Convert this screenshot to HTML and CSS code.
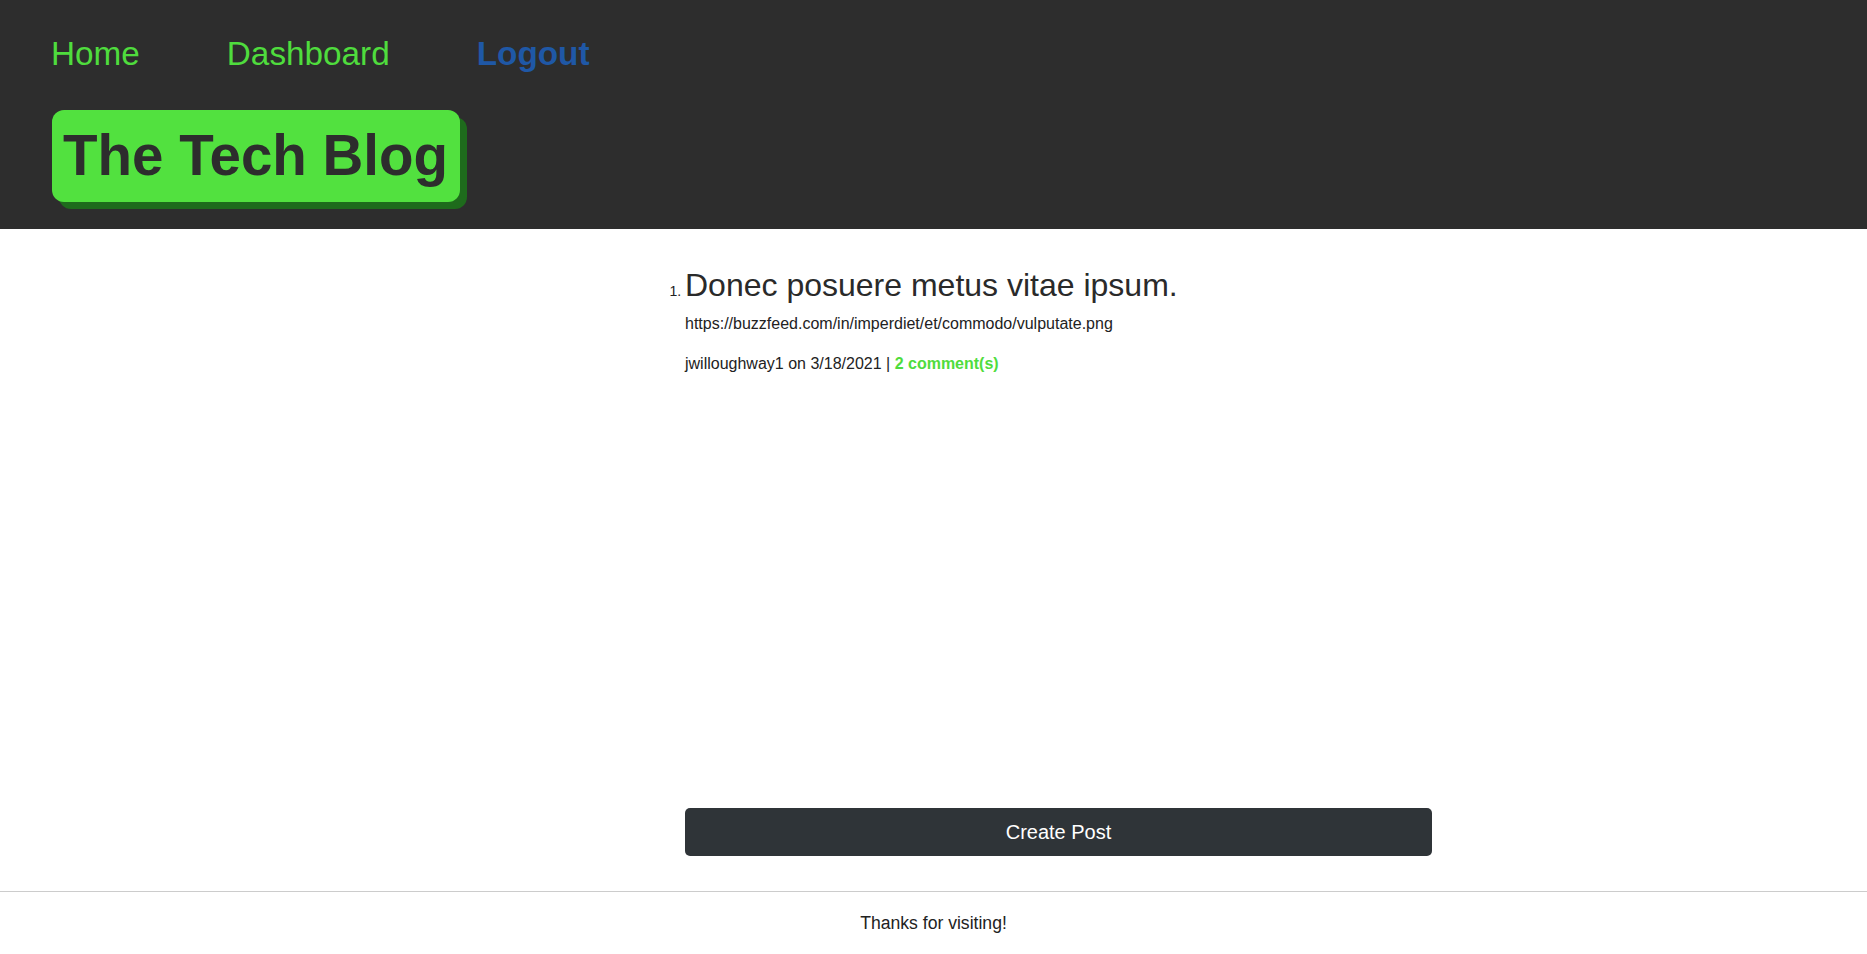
FILE: index.html
```html
<!DOCTYPE html>
<html lang="en">
<head>
<meta charset="utf-8">
<title>The Tech Blog</title>
<link rel="stylesheet" href="styles.css">
</head>
<body>
<header class="site-header">
  <nav class="nav">
    <a class="nav-link" href="#">Home</a>
    <a class="nav-link" href="#">Dashboard</a>
    <a class="nav-link nav-logout" href="#">Logout</a>
  </nav>
  <div class="brand-row">
    <h1 class="brand">The Tech Blog</h1>
  </div>
</header>
<main class="main">
  <div class="content">
    <ol class="post-list">
      <li class="post">
        <h2 class="post-title">Donec posuere metus vitae ipsum.</h2>
        <p class="post-url">https://buzzfeed.com/in/imperdiet/et/commodo/vulputate.png</p>
        <p class="post-meta">jwilloughway1 on 3/18/2021 | <a class="comments" href="#">2 comment(s)</a></p>
      </li>
    </ol>
    <button class="btn-create" type="button">Create Post</button>
  </div>
</main>
<footer class="site-footer">
  <p class="footer-text">Thanks for visiting!</p>
</footer>
</body>
</html>
```

FILE: styles.css
```css
* { box-sizing: border-box; }

html, body {
  margin: 0;
  padding: 0;
  height: 100%;
}

body {
  font-family: "Liberation Sans", Arial, Helvetica, sans-serif;
  color: #222222;
  background: #ffffff;
  display: flex;
  flex-direction: column;
  min-height: 100vh;
}

.site-header {
  background: #2d2d2d;
  padding: 35px 0 27px 51px;
}

.nav {
  display: flex;
  gap: 87px;
}

.nav-link {
  font-size: 33.3px;
  line-height: 38px;
  color: #4fdc3d;
  text-decoration: none;
}

.nav-logout {
  color: #1f58a6;
  font-weight: bold;
}

.brand-row {
  display: flex;
  margin-top: 37px;
  padding-left: 1px;
}

.brand {
  margin: 0;
  font-size: 56.5px;
  line-height: 64px;
  font-weight: bold;
  color: #2d2d2d;
  background: #52e13f;
  padding: 14px 12px 14px 11px;
  border-radius: 12px;
  box-shadow: 7px 7px 0 #1e6b1c;
}

.main {
  flex: 1;
  display: flex;
  padding-left: 685px;
}

.content {
  width: 747px;
  display: flex;
  flex-direction: column;
  padding-top: 37px;
  padding-bottom: 35px;
}

.post-list {
  margin: 0;
  padding: 0;
  list-style: decimal outside;
}

.post {
  font-size: 14px;
}

.post::marker {
  color: #222222;
}

.post-title {
  margin: 0;
  font-size: 32px;
  line-height: 38px;
  font-weight: normal;
  color: #2a2a2a;
}

.post-url {
  margin: 11px 0 0;
  font-size: 16px;
  line-height: 18px;
}

.post-meta {
  margin: 22px 0 0;
  font-size: 16px;
  line-height: 18px;
}

.comments {
  color: #4fdc3d;
  font-weight: bold;
  text-decoration: none;
}

.btn-create {
  margin-top: auto;
  height: 48px;
  width: 100%;
  border: none;
  border-radius: 5px;
  background: #2f3438;
  color: #ffffff;
  font-family: "Liberation Sans", Arial, Helvetica, sans-serif;
  font-size: 20px;
}

.site-footer {
  border-top: 1px solid #cccccc;
  height: 63px;
  padding-top: 21px;
}

.footer-text {
  margin: 0;
  text-align: center;
  font-size: 17.6px;
  line-height: 20px;
  color: #222222;
}
```
